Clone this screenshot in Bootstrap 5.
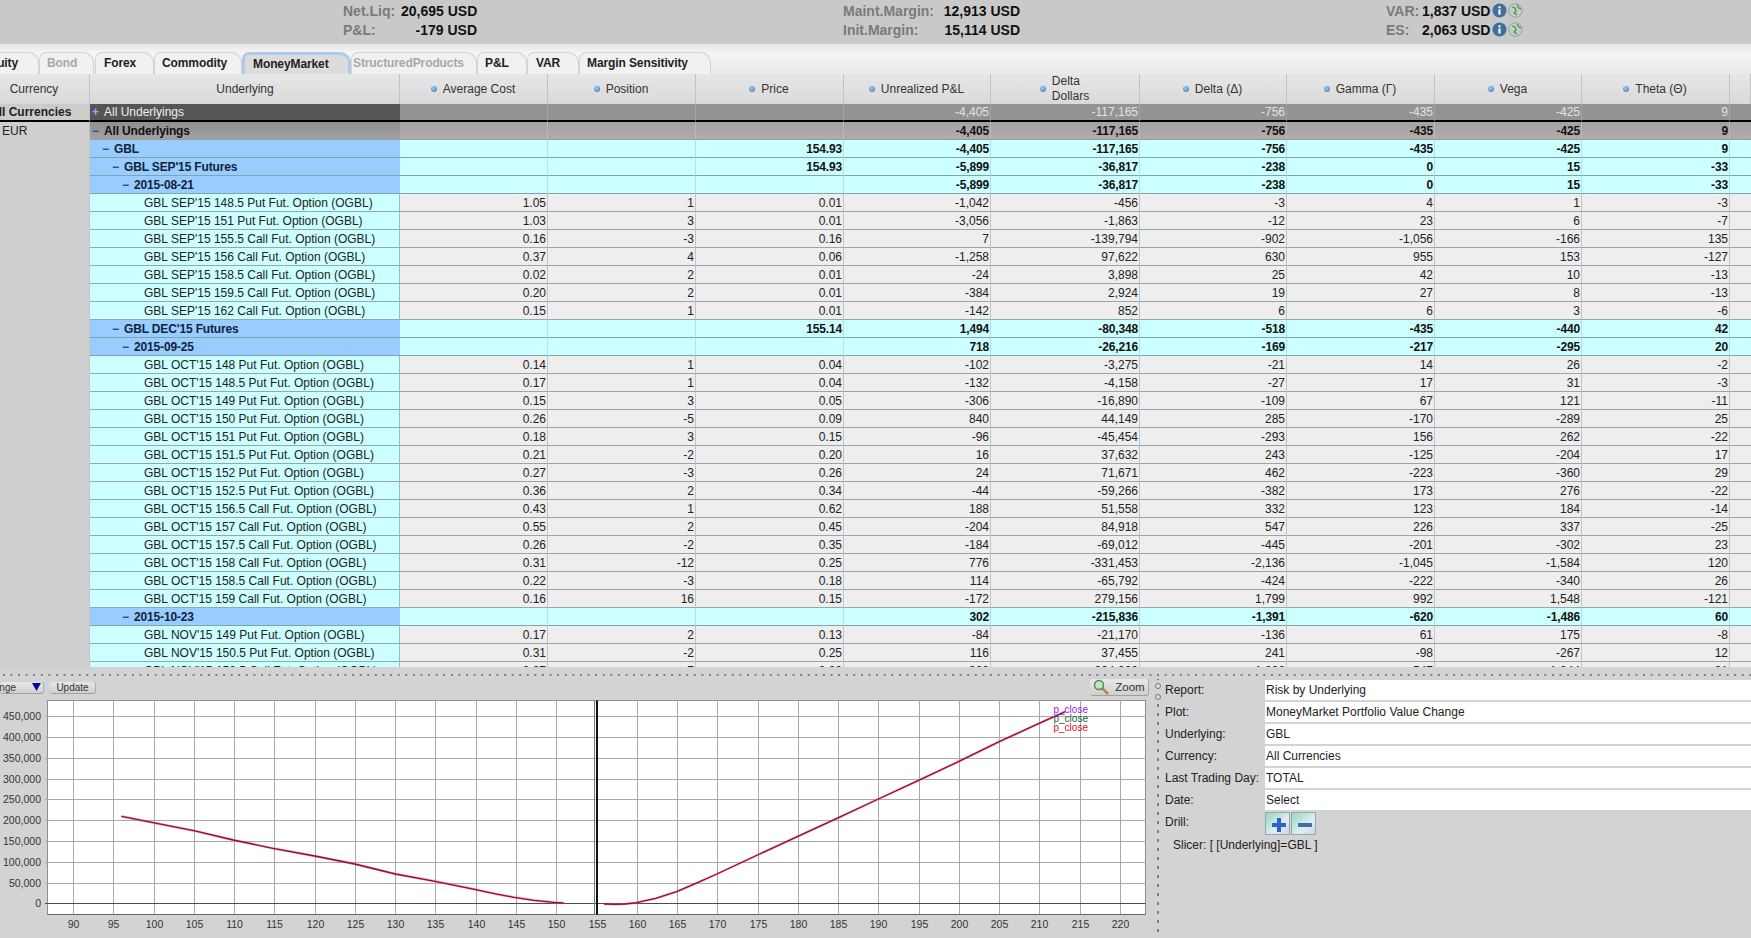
<!DOCTYPE html>
<html lang="en">
<head>
  <meta charset="UTF-8">
  <meta name="viewport" content="width=device-width, initial-scale=1.0">
  <title>Risk Navigator</title>
  <link rel="stylesheet" href="https://cdn.jsdelivr.net/npm/bootstrap@5.3.0/dist/css/bootstrap.min.css">
  <style>
    html, body { height: 938px; overflow: hidden; }
    body { background: #d3d3d3; font-family: "Liberation Sans", Arial, sans-serif; font-size: 12px; color: #222; }

    /* account summary */
    .acct-bar { height: 44px; background: #c9c9c9; padding-top: 2px; }
    .acct-group { display: grid; grid-template-rows: 19px 19px; font-size: 14px; font-weight: 700; line-height: 19px; }
    .acct-group.g1 { margin-left: 343px; grid-template-columns: 58px 76px; }
    .acct-group.g2 { margin-left: 366px; grid-template-columns: 100px 77px; }
    .acct-group.g3 { margin-left: 366px; grid-template-columns: 36px 68px 36px; }
    .acct-label { color: #7a7a7a; }
    .acct-val { color: #111; text-align: right; white-space: nowrap; }
    .acct-icons { display: flex; gap: 1px; padding: 1px 0 0 2px; }

    /* product tabs */
    .prod-tabs { height: 30px; background: linear-gradient(#e6e6e6, #f5f5f5 30%, #e9e9e9); padding-top: 8px; flex-wrap: nowrap; overflow: hidden; border: 0; }
    .prod-tab { height: 22px; line-height: 21px; font-weight: 700; letter-spacing: -.1px; color: #222; background: #f1f1f1; border: 1px solid #d4d4d4; border-bottom: 0; border-radius: 7px 11px 0 0; white-space: nowrap; }
    .prod-tab.off { color: #a8a8a8; }
    .prod-tab.on { background: #dcdcdc; border: 3px solid #aecbe8; border-bottom: 0; line-height: 18px; }

    /* risk grid */
    .grid-wrap { height: 593px; overflow: hidden; background: #cfcfcf; }
    .risk-grid { table-layout: fixed; width: 1751px; margin: 0; border-collapse: separate; border-spacing: 0; }
    .risk-grid th, .risk-grid td { padding: 0 1px 0 0; height: 18px; line-height: 16px; font-size: 12px; white-space: nowrap; overflow: hidden; border: 0; color: #222; vertical-align: middle; box-shadow: none; }
    .risk-grid thead th { height: 30px; font-weight: 400; text-align: center; background: linear-gradient(#e7e7e7, #d9d9d9); border-right: 1px solid #c2c2c2; color: #333; line-height: 15px; }
    .risk-grid thead th.cur-head { padding-right: 21px; }
    .risk-grid thead th.und-head { padding-left: 2px; }
    .head-wrap { display: inline-flex; align-items: center; gap: 6px; text-align: left; }
    .blue-dot { width: 6px; height: 6px; border-radius: 50%; background: radial-gradient(circle at 40% 35%, #a5cdf0, #2c74b8); flex: none; }

    .risk-grid td.cur { background: #cfcfcf; padding-left: 2px; border-right: 1px solid #c4c4c4; }
    .risk-grid td.num { text-align: right; border-right: 1px solid #c4c4c4; }
    .risk-grid td.num.end { border-right: 0; }
    .risk-grid td.lbl { border-right: 1px solid #9db9c4; }
    .mk { display: inline-block; width: 12px; font-weight: 700; }

    tr.r-top td { height: 18px; line-height: 15px; padding-top: 1px; border-bottom: 2px solid #000; }
    tr.r-top td.lbl { background: #555; color: #eee; padding-left: 2px; border-right: 0; }
    tr.r-top td.num { background: #939393; color: #e3e3e3; border-right-color: #a4a4a4; }
    tr.r-top td.cur { font-weight: 700; padding-left: 0; background: #ccc; }
    tr.r-top td.cur span { margin-left: -10px; display: inline-block; }
    tr.r-top .mk { color: #a8a0ff; }

    tr.r-all td { border-bottom: 1px solid #9a9a9a; font-weight: 700; letter-spacing: -.15px; }
    tr.r-all td.lbl { background: linear-gradient(#8f8f8f, #a2a2a2); padding-left: 2px; color: #111; border-right: 0; }
    tr.r-all td.num { background: linear-gradient(#a3a3a3, #b3abab); color: #111; border-right-color: #bdb6b6; }
    tr.r-all td.cur { font-weight: 400; border-bottom: 0; letter-spacing: 0; }
    tr.r-all .mk { color: #2b4a9a; }

    tr.r-grp td { font-weight: 700; letter-spacing: -.15px; border-bottom: 1px solid #7fa4b0; }
    tr.r-grp td.lbl { background: #99ccff; border-right: 0; color: #10233a; }
    tr.r-grp td.num { background: #ccffff; border-right-color: #b9dede; color: #111; }
    tr.r-grp td.cur, tr.r-opt td.cur { font-weight: 400; border-bottom: 0; }
    tr.r-grp .mk { color: #1f4a8a; }
    .lv1 { padding-left: 12px !important; }
    .lv2 { padding-left: 22px !important; }
    .lv3 { padding-left: 32px !important; }

    tr.r-opt td { border-bottom: 1px solid #9aa5a8; }
    tr.r-opt td.lbl { background: #ccffff; padding-left: 54px; color: #222; border-right: 1px solid #8ec0cc; }
    tr.r-opt td.num { background: #eeeeee; border-right-color: #c4c4c4; color: #222; }

    /* splitter */
    .split-h { height: 8px; margin-top: 4px; background: radial-gradient(circle, #7d7d7d 1.2px, transparent 1.4px) 0 0 / 7.6px 8px repeat-x; }
    .split-v { width: 8px; flex: none; background: radial-gradient(circle, #7d7d7d 1.2px, transparent 1.4px) 0 22px / 8px 9px repeat-y; position: relative; }
    .grip { position: absolute; left: 1px; width: 6px; height: 6px; border: 1.5px solid #777; border-radius: 50%; background: #ddd; }

    /* chart panel */
    .chart-pane { width: 1154px; flex: none; }
    .chart-tools { height: 18px; position: relative; }
    .tool-btn { height: 12px; font-size: 10px; line-height: 11px; color: #333; background: linear-gradient(#e9e9e9, #cfcfcf); border: 0; border-right: 1px solid #aaa; border-bottom: 1px solid #a0a0a0; border-radius: 3px; padding: 0; margin-top: 3px; }
    .btn-range { width: 44px; margin-left: 0; overflow: hidden; text-align: left; position: relative; }
    .btn-range span { margin-left: -19px; }
    .btn-range svg { position: absolute; left: 32px; top: 1px; }
    .btn-update { width: 46px; margin-left: 6px; }
    .btn-zoom { position: absolute; top: 0; right: 5px; width: 59px; height: 17px; margin: 0; font-size: 11.5px; line-height: 15px; display: flex; align-items: center; justify-content: center; gap: 6px; }
    .risk-chart { display: block; }
    .risk-chart text { font-family: "Liberation Sans", Arial, sans-serif; font-size: 10.5px; fill: #333; }

    /* report panel */
    .info-pane { flex-grow: 1; padding: 1px 0 0 3px; font-size: 12px; }
    .info-row { display: flex; height: 22px; line-height: 20px; }
    .info-key { width: 100px; flex: none; color: #222; }
    .info-val { flex-grow: 1; height: 20px; background: #fff; color: #222; padding-left: 1px; }
    .drill-row { display: flex; gap: 1px; height: 22px; padding-top: 0; }
    .slicer-line { padding: 3px 0 0 8px; line-height: 16px; }
  </style>
</head>
<body>
<div class="acct-bar d-flex">
  <div class="acct-group g1">
    <div class="acct-label">Net.Liq:</div><div class="acct-val">20,695 USD</div>
    <div class="acct-label">P&amp;L:</div><div class="acct-val">-179 USD</div>
  </div>
  <div class="acct-group g2">
    <div class="acct-label">Maint.Margin:</div><div class="acct-val">12,913 USD</div>
    <div class="acct-label">Init.Margin:</div><div class="acct-val">15,114 USD</div>
  </div>
  <div class="acct-group g3">
    <div class="acct-label">VAR:</div><div class="acct-val">1,837 USD</div><div class="acct-icons" data-icons></div>
    <div class="acct-label">ES:</div><div class="acct-val">2,063 USD</div><div class="acct-icons" data-icons></div>
  </div>
</div>

<div class="nav prod-tabs" id="prodTabs"></div>

<div class="grid-wrap">
  <table class="table risk-grid">
    <colgroup>
      <col style="width:90px"><col style="width:310px"><col style="width:148px"><col style="width:148px"><col style="width:148px"><col style="width:147px"><col style="width:149px"><col style="width:147px"><col style="width:148px"><col style="width:147px"><col style="width:148px"><col>
    </colgroup>
    <thead id="gridHead"></thead>
    <tbody id="gridBody"></tbody>
  </table>
</div>

<div class="split-h"></div>

<div class="d-flex">
  <div class="chart-pane">
    <div class="chart-tools d-flex">
      <button class="tool-btn btn-range" type="button"><span>Change</span>
        <svg width="9" height="8" viewBox="0 0 9 8"><polygon points="0,0 9,0 4.5,8" fill="#0a0a9a"/></svg>
      </button>
      <button class="tool-btn btn-update" type="button">Update</button>
      <button class="tool-btn btn-zoom" type="button">
        <svg width="16" height="16" viewBox="0 0 16 16"><line x1="8" y1="8" x2="15" y2="15" stroke="#b08a50" stroke-width="2.5"/><circle cx="6" cy="6" r="4.5" fill="#bfe6bf" stroke="#4d8a5a" stroke-width="1.5"/></svg>
        Zoom
      </button>
    </div>
    <svg class="risk-chart" id="riskChart" width="1154" height="241" viewBox="0 697 1154 241"></svg>
  </div>
  <div class="split-v">
    <span class="grip" style="top:4px"></span>
    <span class="grip" style="top:15px"></span>
  </div>
  <div class="info-pane" id="infoPane"></div>
</div>

<script>
  const iconInfo = `<svg width="15" height="15" viewBox="0 0 15 15"><circle cx="7.5" cy="7.5" r="7" fill="#3f6f9e"/><rect x="6.4" y="6.5" width="2.2" height="5" fill="#fff"/><rect x="6.4" y="3.3" width="2.2" height="2" fill="#fff"/></svg>`;
  const iconGlobe = `<svg width="15" height="15" viewBox="0 0 15 15"><circle cx="7.5" cy="7.5" r="6.8" fill="#c0d0c2" stroke="#8fa59a"/><path d="M4 4l3 1 1 3-2 2 3 2M9 2l2 3 2 1" fill="none" stroke="#4f8a62" stroke-width="1.3"/></svg>`;
  document.querySelectorAll('[data-icons]').forEach(el => { el.innerHTML = iconInfo + iconGlobe; });

  // tabs, width includes the slanted corner
  const tabs = [
    ['Equity', 58, '', -19, 0], ['Bond', 55, 'off', 0, 7], ['Forex', 59, '', 1, 8], ['Commodity', 88, '', 0, 7],
    ['MoneyMarket', 109, 'on', 0, 8], ['StructuredProducts', 126, 'off', 0, 1], ['P&amp;L', 50, '', 0, 7],
    ['VAR', 52, '', 0, 8], ['Margin Sensitivity', 132, '', 0, 7]
  ];
  document.getElementById('prodTabs').innerHTML = tabs.map(t =>
    `<div class="prod-tab ${t[2]}" style="width:${t[1]}px;margin-left:${t[3]}px;padding-left:${t[4]}px">${t[0]}</div>`).join('');

  const heads = ['Average Cost', 'Position', 'Price', 'Unrealized P&amp;L', 'Delta<br>Dollars', 'Delta (&Delta;)', 'Gamma (&Gamma;)', 'Vega', 'Theta (&Theta;)'];
  document.getElementById('gridHead').innerHTML = `<tr><th class="cur-head">Currency</th><th class="und-head">Underlying</th>` +
    heads.map(h => `<th><span class="head-wrap"><span class="blue-dot"></span><span>${h}</span></span></th>`).join('') + `<th></th></tr>`;

  // [name, avgCost, pos, price, upl, deltaUsd, delta, gamma, vega, theta]
  const opt = (m, s, v) => [`GBL ${m}'15 ${s} Fut. Option (OGBL)`].concat(v.split(' '));
  const rows = [
    ['top', 'All Underlyings', '', '', '', '-4,405', '-117,165', '-756', '-435', '-425', '9'],
    ['all', 'All Underlyings', '', '', '', '-4,405', '-117,165', '-756', '-435', '-425', '9'],
    ['grp', 'GBL', '', '', '154.93', '-4,405', '-117,165', '-756', '-435', '-425', '9', 1],
    ['grp', "GBL SEP'15 Futures", '', '', '154.93', '-5,899', '-36,817', '-238', '0', '15', '-33', 2],
    ['grp', '2015-08-21', '', '', '', '-5,899', '-36,817', '-238', '0', '15', '-33', 3],
    ['opt', ...opt('SEP', '148.5 Put', '1.05 1 0.01 -1,042 -456 -3 4 1 -3')],
    ['opt', ...opt('SEP', '151 Put', '1.03 3 0.01 -3,056 -1,863 -12 23 6 -7')],
    ['opt', ...opt('SEP', '155.5 Call', '0.16 -3 0.16 7 -139,794 -902 -1,056 -166 135')],
    ['opt', ...opt('SEP', '156 Call', '0.37 4 0.06 -1,258 97,622 630 955 153 -127')],
    ['opt', ...opt('SEP', '158.5 Call', '0.02 2 0.01 -24 3,898 25 42 10 -13')],
    ['opt', ...opt('SEP', '159.5 Call', '0.20 2 0.01 -384 2,924 19 27 8 -13')],
    ['opt', ...opt('SEP', '162 Call', '0.15 1 0.01 -142 852 6 6 3 -6')],
    ['grp', "GBL DEC'15 Futures", '', '', '155.14', '1,494', '-80,348', '-518', '-435', '-440', '42', 2],
    ['grp', '2015-09-25', '', '', '', '718', '-26,216', '-169', '-217', '-295', '20', 3],
    ['opt', ...opt('OCT', '148 Put', '0.14 1 0.04 -102 -3,275 -21 14 26 -2')],
    ['opt', ...opt('OCT', '148.5 Put', '0.17 1 0.04 -132 -4,158 -27 17 31 -3')],
    ['opt', ...opt('OCT', '149 Put', '0.15 3 0.05 -306 -16,890 -109 67 121 -11')],
    ['opt', ...opt('OCT', '150 Put', '0.26 -5 0.09 840 44,149 285 -170 -289 25')],
    ['opt', ...opt('OCT', '151 Put', '0.18 3 0.15 -96 -45,454 -293 156 262 -22')],
    ['opt', ...opt('OCT', '151.5 Put', '0.21 -2 0.20 16 37,632 243 -125 -204 17')],
    ['opt', ...opt('OCT', '152 Put', '0.27 -3 0.26 24 71,671 462 -223 -360 29')],
    ['opt', ...opt('OCT', '152.5 Put', '0.36 2 0.34 -44 -59,266 -382 173 276 -22')],
    ['opt', ...opt('OCT', '156.5 Call', '0.43 1 0.62 188 51,558 332 123 184 -14')],
    ['opt', ...opt('OCT', '157 Call', '0.55 2 0.45 -204 84,918 547 226 337 -25')],
    ['opt', ...opt('OCT', '157.5 Call', '0.26 -2 0.35 -184 -69,012 -445 -201 -302 23')],
    ['opt', ...opt('OCT', '158 Call', '0.31 -12 0.25 776 -331,453 -2,136 -1,045 -1,584 120')],
    ['opt', ...opt('OCT', '158.5 Call', '0.22 -3 0.18 114 -65,792 -424 -222 -340 26')],
    ['opt', ...opt('OCT', '159 Call', '0.16 16 0.15 -172 279,156 1,799 992 1,548 -121')],
    ['grp', '2015-10-23', '', '', '', '302', '-215,836', '-1,391', '-620', '-1,486', '60', 3],
    ['opt', ...opt('NOV', '149 Put', '0.17 2 0.13 -84 -21,170 -136 61 175 -8')],
    ['opt', ...opt('NOV', '150.5 Put', '0.31 -2 0.25 116 37,455 241 -98 -267 12')],
    ['opt', ...opt('NOV', '152.5 Call', '0.07 7 0.02 -322 294,000 1,896 -547 1,244 -91')]
  ];

  document.getElementById('gridBody').innerHTML = rows.map((r, i) => {
    const kind = r[0];
    let cur = '';
    if (kind === 'top') cur = '<span>All Currencies</span>';
    if (kind === 'all') cur = 'EUR';
    let name = r[1];
    if (kind === 'top') name = `<span class="mk">+</span>${name}`;
    if (kind === 'all' || kind === 'grp') name = `<span class="mk">&minus;</span>${name}`;
    const lvl = r[11] ? ' lv' + r[11] : '';
    const nums = r.slice(2, 11).map(v => `<td class="num">${v}</td>`).join('');
    return `<tr class="r-${kind}"><td class="cur">${cur}</td><td class="lbl${lvl}">${name}</td>${nums}<td class="num end"></td></tr>`;
  }).join('');

  // chart, coordinates are page pixels through the viewBox
  const plot = { l: 47.5, t: 700.5, r: 1145.5, b: 914.5 };
  const xAt = v => 73 + (v - 90) * 8.054;
  const yAt = v => 903.3 - v / 50000 * 20.78;
  let svg = `<rect x="${plot.l}" y="${plot.t}" width="${plot.r - plot.l}" height="${plot.b - plot.t}" fill="#fff" stroke="#8f8f8f"/>`;
  for (let v = 90; v <= 220; v += 5) {
    const x = Math.round(xAt(v)) + .5;
    svg += `<line x1="${x}" y1="${plot.t}" x2="${x}" y2="${plot.b}" stroke="#a9a9a9"/>`;
    svg += `<text x="${x}" y="928" text-anchor="middle">${v}</text>`;
  }
  for (let v = 0; v <= 450000; v += 50000) {
    const y = Math.round(yAt(v)) + .5;
    svg += `<line x1="45" y1="${y}" x2="${plot.r}" y2="${y}" stroke="${v === 0 ? '#4a4a4a' : '#a9a9a9'}"/>`;
    svg += `<text x="41" y="${y + 3}" text-anchor="end">${v.toLocaleString('en-US')}</text>`;
  }
  svg += `<line x1="47.5" y1="${plot.b}" x2="${plot.r}" y2="${plot.b}" stroke="#666"/>`;
  svg += `<line x1="594.5" y1="${plot.t}" x2="594.5" y2="${plot.b}" stroke="#777" stroke-width="1"/><line x1="597" y1="${plot.t}" x2="597" y2="${plot.b}" stroke="#111" stroke-width="2"/>`;

  // curve traced off the reference
  const z3 = [[307,529],[400,551],[490,572],[590,600],[690,625],[796,648],[897,672],[1000,702],[1100,724],[1200,748],[1250,761],[1300,772],[1350,781],[1400,787],[1425,789]];
  const z5 = [[115,792],[145,793],[170,792],[200,788],[250,775],[305,755],[355,730],[410,702],[516,645],[620,590],[728,533],[832,477],[937,421],[1041,365],[1148,305],[1252,250],[1320,215]];
  const ptsL = z3.map(p => `${(p[0] / 2.529).toFixed(1)},${(640 + p[1] / 3).toFixed(1)}`).join(' ');
  const ptsR = z5.map(p => `${(560 + p[0] / 2.613).toFixed(1)},${(640 + p[1] / 3).toFixed(1)}`).join(' ');
  [ptsL, ptsR].forEach(p => {
    svg += `<polyline points="${p}" fill="none" stroke="#ff5a8a" stroke-width="2.4" stroke-linejoin="round" opacity=".55"/>`;
    svg += `<polyline points="${p}" fill="none" stroke="#8c1040" stroke-width="1.3" stroke-linejoin="round"/>`;
  });
  [['#9a1adf', 713], ['#0a6a2a', 722], ['#e0101a', 731]].forEach(l => {
    svg += `<text x="1053.5" y="${l[1]}" style="fill:${l[0]};font-size:10px">p_close</text>`;
  });
  document.getElementById('riskChart').innerHTML = svg;

  // report info
  const info = [['Report:', 'Risk by Underlying'], ['Plot:', 'MoneyMarket Portfolio Value Change'], ['Underlying:', 'GBL'],
    ['Currency:', 'All Currencies'], ['Last Trading Day:', 'TOTAL'], ['Date:', 'Select']];
  const drillIcon = sign => `<svg width="25" height="23" viewBox="0 0 25 23"><defs><linearGradient id="dg${sign}" x1="0" y1="0" x2="1" y2="1"><stop offset="0" stop-color="#8fd8c0"/><stop offset=".6" stop-color="#dfeef0"/><stop offset="1" stop-color="#c9d6e4"/></linearGradient></defs><rect x=".5" y=".5" width="24" height="22" fill="url(#dg${sign})" stroke="#9aa6b2"/>` +
    (sign === 'plus' ? `<path d="M12 6h4v5h5v4h-5v5h-4v-5H7v-4h5z" fill="#2f62c8"/>` : `<rect x="7" y="11" width="14" height="4" fill="#3f6ea8"/>`) + `</svg>`;
  document.getElementById('infoPane').innerHTML = info.map(r =>
    `<div class="info-row"><div class="info-key">${r[0]}</div><div class="info-val">${r[1]}</div></div>`).join('') +
    `<div class="info-row"><div class="info-key">Drill:</div><div class="drill-row">${drillIcon('plus')}${drillIcon('minus')}</div></div>` +
    `<div class="slicer-line">Slicer: [ [Underlying]=GBL ]</div>`;
</script>

<script src="https://cdn.jsdelivr.net/npm/bootstrap@5.3.0/dist/js/bootstrap.bundle.min.js"></script>
</body>
</html>
